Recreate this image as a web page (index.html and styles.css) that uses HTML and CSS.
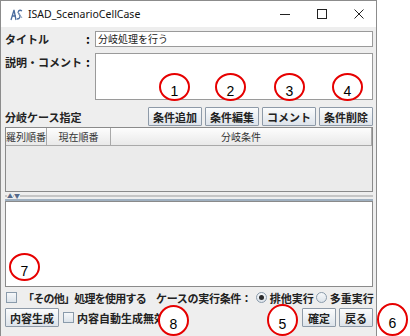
FILE: index.html
```html
<!DOCTYPE html>
<html lang="ja">
<head>
    <meta charset="UTF-8">
    <title>ISAD_ScenarioCellCase</title>
    <link rel="stylesheet" href="styles.css">
</head>
<body>

<div class="window">
    <div class="titlebar">
        <svg class="app-icon" width="14" height="13" viewBox="0 0 14 13">
            <path d="M1 12 L4 2 L6 12 M2 8 L6 8" fill="none" stroke="#4a6c9e" stroke-width="1.3"/>
            <path d="M12 3 C9 1 7 4 9 6 C11 8 10 11 7 11" fill="none" stroke="#4a6c9e" stroke-width="1.3"/>
            <path d="M8 4 L12 10" stroke="#8aa0c0" stroke-width="1"/>
        </svg>
        <span class="title">ISAD_ScenarioCellCase</span>
        <div class="controls">
            <svg width="12" height="12" viewBox="0 0 12 12"><path d="M1 6.5 H11" stroke="#222" stroke-width="1"/></svg>
            <svg width="12" height="12" viewBox="0 0 12 12"><rect x="1.5" y="1.5" width="9" height="9" fill="none" stroke="#222" stroke-width="1"/></svg>
            <svg width="12" height="12" viewBox="0 0 12 12"><path d="M1.5 1.5 L10.5 10.5 M10.5 1.5 L1.5 10.5" stroke="#222" stroke-width="1"/></svg>
        </div>
    </div>

    <div class="content">
        <div class="row">
            <span class="lbl">タイトル</span>
            <span class="colon">:</span>
            <div class="field">分岐処理を行う</div>
        </div>

        <div class="row desc-row">
            <span class="lbl">説明・コメント</span>
            <span class="colon">:</span>
            <div class="area"></div>
        </div>

        <div class="case-row">
            <span class="lbl">分岐ケース指定</span>
            <div class="btns">
                <button class="btn">条件追加</button>
                <button class="btn">条件編集</button>
                <button class="btn">コメント</button>
                <button class="btn">条件削除</button>
            </div>
        </div>

        <div class="table">
            <div class="thead">
                <div class="th col-a">羅列順番</div>
                <div class="th col-b">現在順番</div>
                <div class="th col-c">分岐条件</div>
            </div>
            <div class="tbody"></div>
        </div>

        <div class="splitter">
            <span class="arrow">▲</span><span class="arrow">▼</span>
        </div>

        <div class="lower"></div>

        <div class="opt-row">
            <span class="check"></span>
            <span class="lbl other">「その他」処理を使用する</span>
            <span class="lbl exec">ケースの実行条件：</span>
            <span class="radio on"></span>
            <span class="lbl">排他実行</span>
            <span class="radio"></span>
            <span class="lbl">多重実行</span>
        </div>

        <div class="foot-row">
            <button class="btn">内容生成</button>
            <span class="check"></span>
            <span class="lbl">内容自動生成無効</span>
            <span class="spacer"></span>
            <button class="btn small">確定</button>
            <button class="btn small">戻る</button>
        </div>
    </div>
</div>

<!-- annotation markers -->
<div class="mark m1">1</div>
<div class="mark m2">2</div>
<div class="mark m3">3</div>
<div class="mark m4">4</div>
<div class="mark m5">5</div>
<div class="mark m6">6</div>
<div class="mark m7">7</div>
<div class="mark m8">8</div>

</body>
</html>
```

FILE: styles.css
```css
body {
    margin: 0;
    background-color: #fff;
    font-family: "Noto Sans CJK JP", "Noto Sans", sans-serif;
    position: relative;
    width: 410px;
    height: 336px;
    overflow: hidden;
}

.window {
    width: 377px;
    height: 336px;
    box-sizing: border-box;
    border: 1px solid #8c8c8c;
    border-bottom: none;
    display: flex;
    flex-direction: column;
}

.titlebar {
    height: 26px;
    background-color: #fff;
    display: flex;
    align-items: center;
    padding-left: 9px;
}

.app-icon {
    margin-right: 4px;
}

.title {
    font-family: "Noto Sans", sans-serif;
    font-size: 10.5px;
    color: #111;
}

.controls {
    margin-left: auto;
    display: flex;
    gap: 25px;
    padding-right: 11px;
}

.content {
    flex: 1;
    background-color: #eeeeee;
    padding: 4px 3px 0 4px;
}

.lbl {
    font-size: 11px;
    font-weight: bold;
    color: #222;
    white-space: nowrap;
}

.row {
    display: flex;
    align-items: flex-start;
}

.row .lbl {
    width: 81px;
    line-height: 16px;
}

.colon {
    width: 9px;
    font-size: 12px;
    font-weight: bold;
    line-height: 16px;
}

.field {
    flex: 1;
    height: 16px;
    box-sizing: border-box;
    border: 1px solid #9a9a9a;
    background-color: #fff;
    font-size: 10px;
    line-height: 14px;
    padding-left: 2px;
    color: #222;
}

.desc-row {
    margin-top: 6px;
}

.desc-row .lbl,
.desc-row .colon {
    margin-top: 1px;
}

.area {
    flex: 1;
    height: 47px;
    box-sizing: border-box;
    border: 1px solid #9a9a9a;
    background-color: #fff;
}

.case-row {
    margin-top: 7px;
    display: flex;
    align-items: flex-end;
}

.case-row .lbl {
    line-height: 14px;
    margin-bottom: 2px;
}

.btns {
    margin-left: auto;
    display: flex;
    gap: 3px;
}

.btn {
    width: 54px;
    height: 19px;
    box-sizing: border-box;
    border: 1px solid #8e9aa8;
    border-radius: 1px;
    background: linear-gradient(#fbfcfd, #dde3ea);
    font-family: "Noto Sans CJK JP", sans-serif;
    font-size: 11px;
    font-weight: bold;
    color: #222;
    padding: 0;
    line-height: 16px;
    flex-shrink: 0;
}

.btn.small {
    width: 34px;
}

.table {
    margin-top: 1px;
    height: 65px;
    box-sizing: border-box;
    border: 1px solid #8a8a8a;
    background-color: #ebebeb;
    display: flex;
    flex-direction: column;
}

.thead {
    display: flex;
    height: 17px;
    border-bottom: 1px solid #a9a9a9;
    background: linear-gradient(#fdfdfd, #e9e9e9);
}

.th {
    font-size: 10px;
    line-height: 17px;
    color: #333;
    text-align: center;
    border-right: 1px solid #a9a9a9;
    white-space: nowrap;
    overflow: hidden;
}

.col-a {
    width: 40px;
}

.col-b {
    width: 63px;
}

.col-c {
    flex: 1;
}

.splitter {
    height: 9px;
    box-sizing: border-box;
    border-bottom: 2px solid #9fb0c0;
    background-image: radial-gradient(#c4c4c4 0.7px, transparent 0.9px);
    background-size: 2px 2px;
    background-position: 0 3px;
    background-repeat: repeat-x;
    display: flex;
    align-items: center;
    padding-left: 2px;
    gap: 1px;
}

.arrow {
    font-size: 6px;
    line-height: 7px;
    color: #55698a;
    background-color: #eeeeee;
}

.lower {
    height: 86px;
    box-sizing: border-box;
    border: 1px solid #8a8a8a;
    background-color: #fff;
}

.opt-row {
    height: 21px;
    display: flex;
    align-items: center;
    padding-left: 1px;
}

.opt-row .other {
    margin-left: 6px;
    letter-spacing: -0.75px;
}

.opt-row .exec {
    margin-left: 10px;
    margin-right: 4px;
    letter-spacing: -0.3px;
}

.opt-row .radio + .lbl {
    margin-left: 3px;
    margin-right: 2px;
}

.check {
    width: 11px;
    height: 11px;
    flex-shrink: 0;
    box-sizing: border-box;
    border: 1px solid #8a9bab;
    background: linear-gradient(#f6f8fa, #dce3ea);
}

.radio {
    width: 11px;
    height: 11px;
    flex-shrink: 0;
    box-sizing: border-box;
    border: 1px solid #8a9bab;
    border-radius: 50%;
    background: linear-gradient(#f6f8fa, #dce3ea);
    display: flex;
    align-items: center;
    justify-content: center;
}

.radio.on::after {
    content: "";
    width: 5px;
    height: 5px;
    border-radius: 50%;
    background-color: #2a2a2a;
}

.foot-row {
    display: flex;
    align-items: center;
    gap: 3px;
}

.foot-row .check {
    margin-left: 1px;
}

.spacer {
    flex: 1;
}

.mark {
    position: absolute;
    width: 31px;
    height: 28px;
    box-sizing: border-box;
    border: 2px solid #e60000;
    border-radius: 50%;
    background-color: #fff;
    font-family: "Liberation Sans", sans-serif;
    font-size: 14px;
    color: #000;
    text-align: center;
    padding-top: 9px;
    line-height: 14px;
}

.m1 { left: 159px; top: 73px; }
.m2 { left: 215px; top: 73px; }
.m3 { left: 274px; top: 73px; }
.m4 { left: 332px; top: 73px; }
.m5 { left: 267px; top: 304px; height: 32px; padding-top: 11px; }
.m6 { left: 377px; top: 303px; height: 33px; padding-top: 11px; }
.m7 { left: 9px; top: 253px; }
.m8 { left: 158px; top: 305px; height: 31px; padding-top: 10px; }
```
